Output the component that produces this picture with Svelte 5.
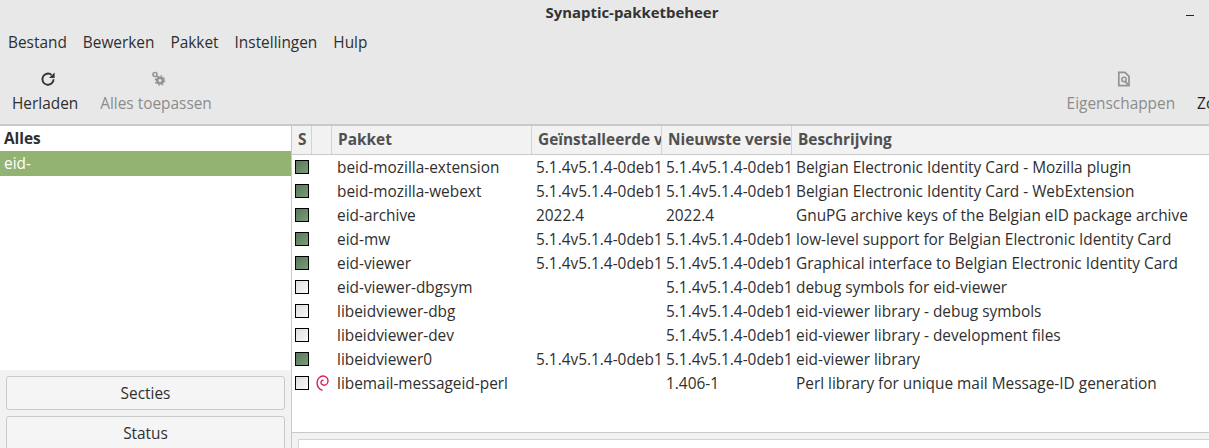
<script>
  const menus = ['Bestand', 'Bewerken', 'Pakket', 'Instellingen', 'Hulp']
  const v = '5.1.4v5.1.4-0deb1'
  const packages = [
    { name: 'beid-mozilla-extension', inst: v, latest: v, desc: 'Belgian Electronic Identity Card - Mozilla plugin', on: true },
    { name: 'beid-mozilla-webext', inst: v, latest: v, desc: 'Belgian Electronic Identity Card - WebExtension', on: true },
    { name: 'eid-archive', inst: '2022.4', latest: '2022.4', desc: 'GnuPG archive keys of the Belgian eID package archive', on: true },
    { name: 'eid-mw', inst: v, latest: v, desc: 'low-level support for Belgian Electronic Identity Card', on: true },
    { name: 'eid-viewer', inst: v, latest: v, desc: 'Graphical interface to Belgian Electronic Identity Card', on: true },
    { name: 'eid-viewer-dbgsym', inst: '', latest: v, desc: 'debug symbols for eid-viewer', on: false },
    { name: 'libeidviewer-dbg', inst: '', latest: v, desc: 'eid-viewer library - debug symbols', on: false },
    { name: 'libeidviewer-dev', inst: '', latest: v, desc: 'eid-viewer library - development files', on: false },
    { name: 'libeidviewer0', inst: v, latest: v, desc: 'eid-viewer library', on: true },
    { name: 'libemail-messageid-perl', inst: '', latest: '1.406-1', desc: 'Perl library for unique mail Message-ID generation', on: false, debian: true }
  ]
</script>

<div class="screen">
  <div class="window">
    <header class="titlebar">
      <span class="title">Synaptic-pakketbeheer</span>
      <span class="minimize"></span>
    </header>

    <nav class="menubar">
      {#each menus as item}
        <span>{item}</span>
      {/each}
    </nav>

    <div class="toolbar">
      <div class="tool">
        <svg width="16" height="16" viewBox="0 0 16 16">
          <path d="M13.6 8.2A5.6 5.6 0 1 1 11.6 3.9" fill="none" stroke="#333" stroke-width="1.9" />
          <path d="M14.6 1.4V7H9Z" fill="#333" />
        </svg>
        <span>Herladen</span>
      </div>
      <div class="tool disabled">
        <svg width="16" height="16" viewBox="0 0 16 16">
          <circle cx="4" cy="3.5" r="2" fill="none" stroke="#939393" stroke-width="1.6" />
          <circle cx="9" cy="9.5" r="2.8" fill="none" stroke="#939393" stroke-width="2.6" />
          <circle cx="9" cy="9.5" r="4.6" fill="none" stroke="#939393" stroke-width="1.4" stroke-dasharray="1.8 1.8" />
        </svg>
        <span>Alles toepassen</span>
      </div>
      <div class="spacer"></div>
      <div class="tool disabled">
        <svg width="16" height="16" viewBox="0 0 16 16">
          <path d="M2.8 1.3H9L13 5.3V14.7H2.8Z" fill="none" stroke="#939393" stroke-width="1.7" />
          <circle cx="8" cy="8.5" r="2.2" fill="none" stroke="#939393" stroke-width="1.5" />
          <path d="M9.5 10.5L12.5 14.5" stroke="#939393" stroke-width="2" />
        </svg>
        <span>Eigenschappen</span>
      </div>
      <div class="tool cut">
        <span class="blank-icon"></span>
        <span>Zoeken</span>
      </div>
    </div>

    <main class="content">
      <aside class="sidebar">
        <div class="filters">
          <div class="filter-head">Alles</div>
          <div class="filter-selected">eid-</div>
        </div>
        <div class="side-buttons">
          <button>Secties</button>
          <button>Status</button>
        </div>
      </aside>

      <section class="list">
        <div class="rows">
          <div class="row head">
            <div>S</div>
            <div></div>
            <div>Pakket</div>
            <div>Geïnstalleerde versie</div>
            <div>Nieuwste versie</div>
            <div>Beschrijving</div>
          </div>
          {#each packages as p}
            <div class="row">
              <div class="cell-check"><span class="check" class:on={p.on}></span></div>
              <div class="cell-icon">
                {#if p.debian}
                  <svg width="13" height="16" viewBox="0 0 13 16">
                    <path d="M6.5 15.4C3.2 14 1 11 1.1 7.6C1.2 3.8 3.9 1 7 1C10 1 12.1 3.2 12 6C11.9 8.6 9.9 10.2 8 10.2C6.2 10.2 4.9 8.9 5 7.3C5.1 5.8 6.3 5 7.6 5.1"
                      fill="none" stroke="#d4245f" stroke-width="1.4" />
                  </svg>
                {/if}
              </div>
              <div class="cell-name">{p.name}</div>
              <div class="cell-ver">{p.inst}</div>
              <div class="cell-ver">{p.latest}</div>
              <div class="cell-desc">{p.desc}</div>
            </div>
          {/each}
        </div>
        <div class="details">
          <div class="details-box"></div>
        </div>
      </section>
    </main>
  </div>
</div>

<style>
  :global(body) {
    margin: 0;
    background: #f2f2f2;
  }

  .screen {
    width: 1209px;
    height: 448px;
    overflow: hidden;
  }

  .window {
    width: 1264px;
    height: 448px;
    display: flex;
    flex-direction: column;
    background: #e8e8e8;
    color: #2f2f2f;
    font-family: "Open Sans", "Noto Sans", sans-serif;
    font-size: 15.4px;
  }

  .titlebar {
    height: 24px;
    flex: none;
    display: flex;
    align-items: center;
    justify-content: center;
    position: relative;
  }

  .title {
    font-weight: 700;
    font-size: 14.9px;
    color: #333;
  }

  .minimize {
    position: absolute;
    left: 1186px;
    top: 15px;
    width: 8px;
    height: 1px;
    background: #222;
  }

  .menubar {
    height: 36px;
    flex: none;
    display: flex;
    align-items: center;
    gap: 16px;
    padding-left: 8px;
  }

  .toolbar {
    height: 64px;
    flex: none;
    display: flex;
    gap: 6px;
    padding: 0 6px 0 4px;
    border-bottom: 2px solid #c9c9c9;
  }

  .tool {
    display: flex;
    flex-direction: column;
    align-items: center;
    padding: 11px 8px 0;
    gap: 6px;
  }

  .tool svg {
    display: block;
    flex: none;
    margin-left: 6px;
  }

  .blank-icon {
    display: block;
    height: 16px;
    flex: none;
  }

  .disabled {
    color: #8c8c8c;
  }

  .spacer {
    flex: 1;
  }

  .cut {
    color: #222;
  }

  .content {
    flex: 1;
    display: flex;
    min-height: 0;
  }

  .sidebar {
    width: 291px;
    flex: none;
    display: flex;
    flex-direction: column;
    background: #f2f2f2;
    border-right: 1px solid #c9c9c9;
  }

  .filters {
    height: 244px;
    flex: none;
    background: #fff;
  }

  .filter-head {
    height: 25px;
    line-height: 25px;
    padding-left: 4px;
    font-weight: 700;
  }

  .filter-selected {
    height: 25px;
    line-height: 25px;
    padding-left: 4px;
    background: #92b372;
    color: #fff;
  }

  .side-buttons {
    display: flex;
    flex-direction: column;
    gap: 6px;
    padding: 6px 6px 0;
  }

  button {
    height: 34px;
    flex: none;
    border: 1px solid #c9c9c9;
    border-radius: 3px;
    background: #f5f5f5;
    color: #2f2f2f;
    font: inherit;
    padding: 0;
  }

  .list {
    flex: 1;
    min-width: 0;
    display: flex;
    flex-direction: column;
    background: #fff;
  }

  .rows {
    flex: 1;
    min-height: 0;
  }

  .row {
    display: grid;
    grid-template-columns: 20px 20px 200px 130px 130px 1fr;
    height: 24px;
    align-items: center;
  }

  .row > div {
    white-space: nowrap;
    overflow: hidden;
    box-sizing: border-box;
  }

  .head {
    height: 29px;
    align-items: stretch;
    background: #f2f2f2;
    border-bottom: 1px solid #c9c9c9;
    box-sizing: border-box;
    color: #505050;
    font-weight: 700;
  }

  .head > div {
    line-height: 28px;
    padding-left: 6px;
    border-right: 1px solid #d3d3d3;
  }

  .head > div:last-child {
    border-right: 0;
  }

  .cell-check {
    display: flex;
    padding-left: 3px;
  }

  .check {
    width: 12px;
    height: 12px;
    border: 1px solid #000;
    background: linear-gradient(135deg, #dcdcdc, #fafafa);
    display: block;
  }

  .check.on {
    background: linear-gradient(135deg, #55785a, #7d9c78);
  }

  .cell-icon {
    display: flex;
    padding-left: 4px;
  }

  .cell-name {
    padding-left: 5px;
  }

  .cell-ver, .cell-desc {
    padding-left: 4px;
  }

  .cell-ver {
    border-right: 2px solid transparent;
  }

  .details {
    height: 16px;
    flex: none;
    background: #f2f2f2;
    border-top: 1px solid #c9c9c9;
    padding: 6px 0 0 6px;
    box-sizing: border-box;
  }

  .details-box {
    height: 30px;
    background: #fff;
    border: 1px solid #d3d3d3;
  }
</style>
